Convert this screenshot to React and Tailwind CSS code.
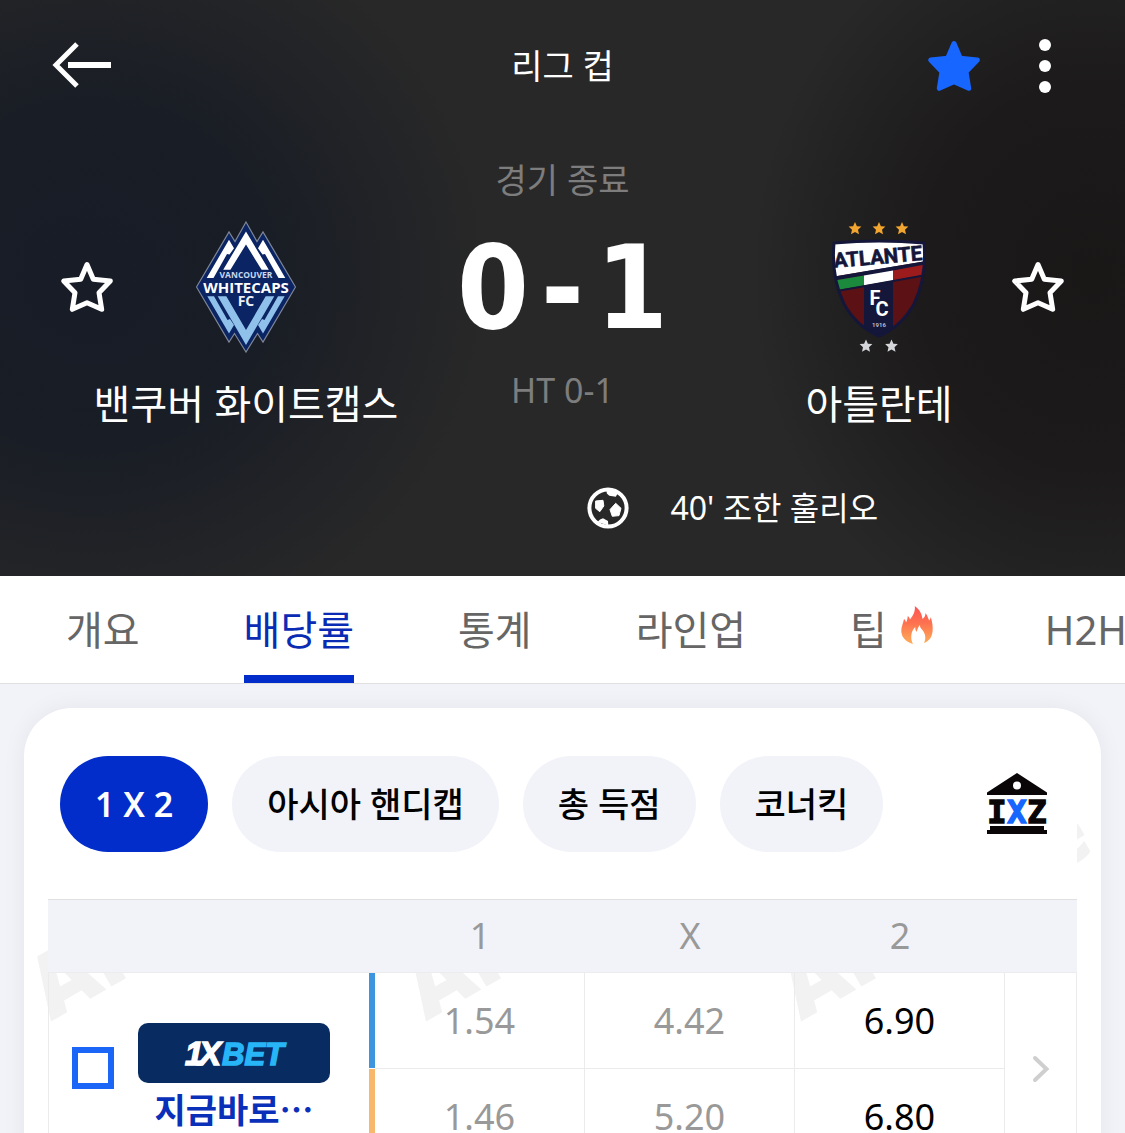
import React from 'react';

const tabs = [
  { key: 'overview', label: '개요' },
  { key: 'odds', label: '배당률' },
  { key: 'stats', label: '통계' },
  { key: 'lineup', label: '라인업' },
  { key: 'tips', label: '팁', hot: true },
  { key: 'h2h', label: 'H2H' },
];

const markets = [
  { key: '1x2', label: '1 X 2' },
  { key: 'asian', label: '아시아 핸디캡' },
  { key: 'total', label: '총 득점' },
  { key: 'corner', label: '코너킥' },
];

const odds = [
  { key: 'opening', bar: 'bg-[#3d94df]', values: ['1.54', '4.42', '6.90'] },
  { key: 'prematch', bar: 'bg-[#f7b76d]', values: ['1.46', '5.20', '6.80'] },
];

const STAR = 'M27 4.5 33.3 19.3 50.3 21 39 32.7 41.7 49.3 27 42.7 12.3 49.3 15 32.7 3.7 21 20.7 19.3Z';
const SMALL_STAR = 'M0-6.5 1.9-2.2 6.4-1.9 3 1.2 4 5.8 0 3.4-4 5.8-3 1.2-6.4-1.9-1.9-2.2Z';

const StarIcon = ({ filled = false }) => (
  <svg viewBox="0 0 54 54" className="size-[54px]" aria-hidden="true">
    <path
      d={STAR}
      fill={filled ? '#1766ff' : 'none'}
      stroke={filled ? '#1766ff' : '#fff'}
      strokeWidth="5"
      strokeLinejoin="round"
    />
  </svg>
);

const BackIcon = () => (
  <svg viewBox="0 0 60 48" className="h-12 w-[60px]" fill="none" stroke="#fff" aria-hidden="true">
    <path d="M25 2 4 23 25 44" strokeWidth="5" />
    <path d="M16 23H59" strokeWidth="6" />
  </svg>
);

const MoreIcon = () => (
  <svg viewBox="0 0 12 54" className="h-[54px] w-3" fill="#fff" aria-hidden="true">
    <circle cx="6" cy="6" r="6" />
    <circle cx="6" cy="27" r="6" />
    <circle cx="6" cy="48" r="6" />
  </svg>
);

const BallIcon = () => (
  <svg viewBox="0 0 42 42" className="size-[42px]" fill="#fff" aria-hidden="true">
    <circle cx="21" cy="21" r="18.6" fill="none" stroke="#fff" strokeWidth="4" />
    <path d="M8.6 14 16 13.3 16.8 19 12.8 24.7 8.6 21.3Z" stroke="#fff" strokeLinejoin="round" />
    <path d="M28.7 16.3 34 21.3 32 28.6 25.3 29.3 23 22.6Z" stroke="#fff" strokeLinejoin="round" />
    <path d="M19.5 3 31.5 5 28.8 9.8 22.3 8.7 19.8 6.5Z" />
    <path d="M10.5 35 13 32.5 16 31.3 21 34 21.3 38.5Z" />
  </svg>
);

const FlameIcon = () => (
  <svg viewBox="0 0 32 38" className="mb-2.5 h-[38px] w-12" aria-hidden="true">
    <defs>
      <linearGradient id="flame" x1="0" y1="0" x2="0" y2="1">
        <stop offset="0" stopColor="#ff5252" />
        <stop offset="0.45" stopColor="#fd7250" />
        <stop offset="1" stopColor="#ffae58" />
      </linearGradient>
    </defs>
    <path
      fill="url(#flame)"
      d="M13.8 0C19 3.500 21 8.500 21.500 13C23.500 11.500 24.500 9.500 24.500 7C27 10 27 12.500 28.300 14.500C29 13.500 29.500 12.500 29.800 11C31.500 17 32 21 31.600 25C31 31.500 28 35 23 37C25 33 25 28 21 23.500C19.500 22 19 21 18.800 19C17.200 21 16.500 23 15.600 26C14.500 24.500 14.300 23 14.200 21C10 25 9 32 12 38C4 35.500 0 30.500 .3 24C.5 20.500 2 18 3 13C4.300 14 4.600 15 5 16.500C6.200 14.500 6.500 12.500 6.800 10C8 11 8.600 12 9 13.500C12.500 9 14.500 5 13.800 0Z"
    />
  </svg>
);

const WhitecapsCrest = () => (
  <svg viewBox="0 0 100 132" className="h-[132px] w-[100px]" role="img" aria-label="밴쿠버 화이트캡스">
    <path
      d="M50 1 61 20.500 67 11 99.500 66 67 121 61.500 112.500 50 131 38.500 112.500 33 121 .5 66 33 11 39 20.500Z"
      fill="#0a2464"
      stroke="#7f8797"
      strokeWidth="1.200"
    />
    <g fill="#fff">
      <path d="M50 10.500 72.800 48.700H65.600L50 23.500 34.400 48.700H27.200Z" />
      <path d="M33 18.700 38 27.300 33.500 33.500 31 33 17.500 57H10.700Z" />
      <path d="M67 18.700 62 27.300 66.500 33.500 69 33 82.500 57H89.300Z" />
    </g>
    <g fill="#8fc1ea">
      <path d="M21.700 75.300H30.300L50 109 69.700 75.300H78.300L50 124Z" />
      <path d="M11.300 75.300H18L31.500 99 34 98 38 104 33 112.500Z" />
      <path d="M88.700 75.300H82L68.500 99 66 98 62 104 67 112.500Z" />
    </g>
    <g textAnchor="middle" fontFamily="'Open Sans', 'Noto Sans', sans-serif" fontWeight="700">
      <text x="50" y="57" fontSize="8.500" fill="#c9d8ee">VANCOUVER</text>
      <text x="50" y="71.500" fontSize="15" fill="#fff">WHITECAPS</text>
      <text x="50" y="85" fontSize="14" fill="#e9f0fa">FC</text>
    </g>
  </svg>
);

const AtlanteCrest = () => (
  <svg viewBox="0 0 96 132" className="h-[132px] w-24" role="img" aria-label="아틀란테">
    <defs>
      <clipPath id="shield">
        <path d="M3 22Q48 18 93 22Q96 56 83 83Q70 106 48 115Q26 106 13 83Q0 56 3 22Z" />
      </clipPath>
    </defs>
    <g fill="#f2a52f">
      <path d={SMALL_STAR} transform="translate(24 7.500)" />
      <path d={SMALL_STAR} transform="translate(48 7.500)" />
      <path d={SMALL_STAR} transform="translate(71 7.500)" />
    </g>
    <g clipPath="url(#shield)">
      <rect y="18" width="96" height="100" fill="#5c1214" />
      <rect x="33" y="40" width="29" height="78" fill="#14163a" />
      <path d="M0 18H96V40L0 56Z" fill="#fff" />
      <path d="M0 56 96 40V44L0 60Z" fill="#14163a" />
      <path d="M0 60 33 54.500V64.500L0 70Z" fill="#1c8a3c" />
      <path d="M33 54.500 62 49.500V59.500L33 64.500Z" fill="#fff" />
      <path d="M62 49.500 96 43V53L62 59.500Z" fill="#9c1b1d" />
      <path d="M0 71 96 54" stroke="#14163a" strokeWidth="2" />
    </g>
    <path
      d="M3 22Q48 18 93 22Q96 56 83 83Q70 106 48 115Q26 106 13 83Q0 56 3 22Z"
      fill="none"
      stroke="#14163a"
      strokeWidth="3"
    />
    <g textAnchor="middle" fontFamily="Roboto, sans-serif" fontWeight="700">
      <text x="47" y="43" fontSize="20.500" fill="#14163a" stroke="#14163a" strokeWidth=".6" transform="rotate(-5 47 38)">
        ATLANTE
      </text>
      <text x="44" y="84" fontSize="20" fill="#fff">F</text>
      <text x="51" y="95" fontSize="20" fill="#fff">C</text>
      <text x="48" y="106" fontSize="6" fill="#b9bccb">1916</text>
    </g>
    <g fill="#d4d6d9">
      <path d={SMALL_STAR} transform="translate(35 125)" />
      <path d={SMALL_STAR} transform="translate(60.500 125)" />
    </g>
  </svg>
);

const BankIcon = () => (
  <svg viewBox="0 0 62 62" className="size-[62px]" aria-hidden="true">
    <path
      fillRule="evenodd"
      d="M31 0 61 19.500V22H1V19.500ZM31 8.500a4 4 0 1 0 0 8 4 4 0 0 0 0-8Z"
      fill="#0a0607"
    />
    <g textAnchor="middle" fontFamily="'DejaVu Sans Mono', monospace" fontWeight="700" fontSize="32" strokeWidth="1.500">
      <text x="11" y="50" fill="#0a0607" stroke="#0a0607">I</text>
      <text x="51" y="50" fill="#0a0607" stroke="#0a0607">Z</text>
      <text x="31" y="50" fill="#1766ff" stroke="#1766ff">X</text>
    </g>
    <path d="M4 53H58V57H61V61H1V57H4Z" fill="#0a0607" />
  </svg>
);

const BookmakerLogo = () => (
  <svg viewBox="0 0 192 60" className="h-[60px] w-48 rounded-[10px]" role="img" aria-label="1XBET">
    <rect width="192" height="60" fill="#082c61" />
    <g fontFamily="'Liberation Sans', Arial, sans-serif" fontWeight="700" fontStyle="italic" strokeWidth="1.500">
      <text x="47" y="42" fontSize="33" fill="#fff" stroke="#fff">1</text>
      <text x="61" y="42" fontSize="33" fill="#fff" stroke="#fff">X</text>
      <text x="84" y="42" fontSize="31" fill="#27b5f7" stroke="#27b5f7">BET</text>
    </g>
  </svg>
);

const Team = ({ name, crest, starSide }) => {
  const star = (
    <button type="button" aria-label="즐겨찾기" className="block">
      <StarIcon />
    </button>
  );
  return (
    <div className="pt-[89px]">
      <div className="grid grid-cols-[1fr_auto_1fr] items-center">
        <div>{starSide === 'left' && star}</div>
        {crest}
        <div className="justify-self-end">{starSide === 'right' && star}</div>
      </div>
      <h2 className="mt-6 text-center text-[40px] leading-[54px] whitespace-nowrap">{name}</h2>
    </div>
  );
};

const MatchHeader = () => (
  <header className="bg-[#282828] bg-[radial-gradient(ellipse_400px_380px_at_8%_48%,#171c27_0%,#191d25_45%,#28282800_100%),radial-gradient(ellipse_340px_380px_at_97%_48%,#1a1717_0%,#1c1a1b_50%,#28282800_100%)] pb-11 text-white">
    <div className="grid h-[132px] grid-cols-[1fr_auto_1fr] items-center px-13">
      <button type="button" aria-label="뒤로" className="justify-self-start">
        <BackIcon />
      </button>
      <h1 className="text-[34px] leading-[48px]">리그 컵</h1>
      <div className="flex items-center gap-9 justify-self-end">
        <button type="button" aria-label="즐겨찾기">
          <StarIcon filled />
        </button>
        <button type="button" aria-label="더보기" className="flex w-14 justify-center">
          <MoreIcon />
        </button>
      </div>
    </div>

    <div className="grid grid-cols-[1fr_261px_1fr] px-[60px]">
      <Team name="밴쿠버 화이트캡스" crest={<WhitecapsCrest />} starSide="left" />
      <div className="pt-6 text-center">
        <p className="text-[34px] leading-[48px] text-[#7d7d7d]">경기 종료</p>
        <p className="mt-7 grid grid-cols-[1fr_auto_1fr] gap-3 font-['DejaVu_Sans_Condensed','DejaVu_Sans',sans-serif] text-[115px] leading-[112px] font-bold">
          <span className="text-right">0</span>
          <span>-</span>
          <span className="text-left">1</span>
        </p>
        <p className="mt-[22px] text-[34px] leading-[48px] text-[#7d7d7d]">HT 0-1</p>
      </div>
      <Team name="아틀란테" crest={<AtlanteCrest />} starSide="right" />
    </div>

    <div className="mt-[53px] grid grid-cols-2">
      <div className="col-start-2 flex items-center gap-[42px] pl-6">
        <BallIcon />
        <p className="text-[32px] leading-[48px]">40' 조한 훌리오</p>
      </div>
    </div>
  </header>
);

const TabBar = ({ active }) => (
  <nav className="flex h-[108px] shrink-0 gap-26 overflow-hidden border-b border-[#e0e0e0] bg-white pl-[66px]">
    {tabs.map((tab) => (
      <a
        key={tab.key}
        href={`#${tab.key}`}
        className={`flex shrink-0 items-center gap-1.5 border-y-8 border-t-transparent text-[40px] leading-[48px] ${
          tab.key === active ? 'border-b-[#022dca] text-[#0a2cb4]' : 'border-b-transparent text-[#666]'
        }`}
      >
        {tab.label}
        {tab.hot && <FlameIcon />}
      </a>
    ))}
  </nav>
);

const Watermark = () => (
  <div className="pointer-events-none absolute inset-x-0 top-0 flex pt-54 pl-10" aria-hidden="true">
    {[0, 1, 2].map((n) => (
      <span key={n} className="w-[375px] shrink-0 origin-bottom-left -rotate-30 font-['Open_Sans',sans-serif] text-[88px] leading-[120px] font-extrabold text-[#f2f2f2]">
        AiScore
      </span>
    ))}
  </div>
);

const OddsTable = () => (
  <table className="relative mx-6 w-[calc(100%-48px)] table-fixed border-separate border-spacing-0 text-center text-[36px] leading-[48px]">
    <colgroup>
      <col className="w-[321px]" />
      <col className="w-1.5" />
      <col />
      <col />
      <col />
      <col className="w-[72px]" />
    </colgroup>
    <thead className="bg-[#f2f3f8] text-[#999]">
      <tr className="h-[74px]">
        <td colSpan={2} className="border-y border-t-[#e0e0e0] border-b-[#ececef]" />
        {['1', 'X', '2'].map((h) => (
          <th key={h} scope="col" className="border-y border-t-[#e0e0e0] border-b-[#ececef] p-0 font-normal">
            {h}
          </th>
        ))}
        <td className="border-y border-t-[#e0e0e0] border-b-[#ececef]" />
      </tr>
    </thead>
    <tbody>
      {odds.map((row, rowIndex) => (
        <tr key={row.key} className="h-24">
          {rowIndex === 0 && (
            <td rowSpan={2} className="border-l border-[#ebebeb] p-0 align-top">
              <div className="flex gap-6 pt-[50px] pl-[23px]">
                <input
                  type="checkbox"
                  aria-label="1XBET"
                  className="mt-6 size-[42px] shrink-0 appearance-none border-6 border-[#1b66f6] bg-white"
                />
                <a href="#bookmaker" className="flex w-48 flex-col items-center">
                  <BookmakerLogo />
                  <span className="mt-0.5 font-['Noto_Sans_CJK_KR',sans-serif] text-[34px] font-bold text-[#0a2fb8]">
                    지금바로…
                  </span>
                </a>
              </div>
            </td>
          )}
          <td className={`border-b border-white p-0 ${row.bar}`} />
          {row.values.map((value, i) => (
            <td
              key={i}
              className={`border-r border-b border-[#ebebeb] p-0 ${i === 2 ? 'text-black' : 'text-[#999]'}`}
            >
              {value}
            </td>
          ))}
          {rowIndex === 0 && (
            <td rowSpan={2} className="border-r border-[#ebebeb] p-0">
              <button type="button" aria-label="상세" className="mx-auto block">
                <svg viewBox="0 0 18 28" className="h-7 w-[18px]" aria-hidden="true">
                  <path d="M3 3 14.500 14 3 25" fill="none" stroke="#cfcfcf" strokeWidth="4" strokeLinecap="round" />
                </svg>
              </button>
            </td>
          )}
        </tr>
      ))}
    </tbody>
  </table>
);

const OddsCard = () => (
  <section className="relative mx-6 mt-6 flex-1 rounded-t-[48px] bg-white pt-12 shadow-[0_0_24px_rgba(0,0,0,0.06)]">
    <Watermark />
    <div className="relative mx-6 flex items-center gap-6 bg-white pr-[29px] pb-[47px] pl-3">
      {markets.map((market, i) => (
        <button
          key={market.key}
          type="button"
          className={`h-24 shrink-0 rounded-full px-[35px] text-[34px] leading-[48px] whitespace-nowrap ${
            i === 0 ? 'bg-[#022dca] font-semibold text-white' : 'bg-[#f2f3f8] font-medium text-black'
          }`}
        >
          {market.label}
        </button>
      ))}
      <button type="button" aria-label="북메이커" className="ml-auto">
        <BankIcon />
      </button>
    </div>
    <OddsTable />
  </section>
);

const App = () => (
  <div
    lang="ko"
    className="flex h-screen flex-col overflow-hidden bg-[#f2f3f8] font-['Noto_Sans','Noto_Sans_CJK_KR',sans-serif]"
  >
    <MatchHeader />
    <TabBar active="odds" />
    <OddsCard />
  </div>
);

export default App;
